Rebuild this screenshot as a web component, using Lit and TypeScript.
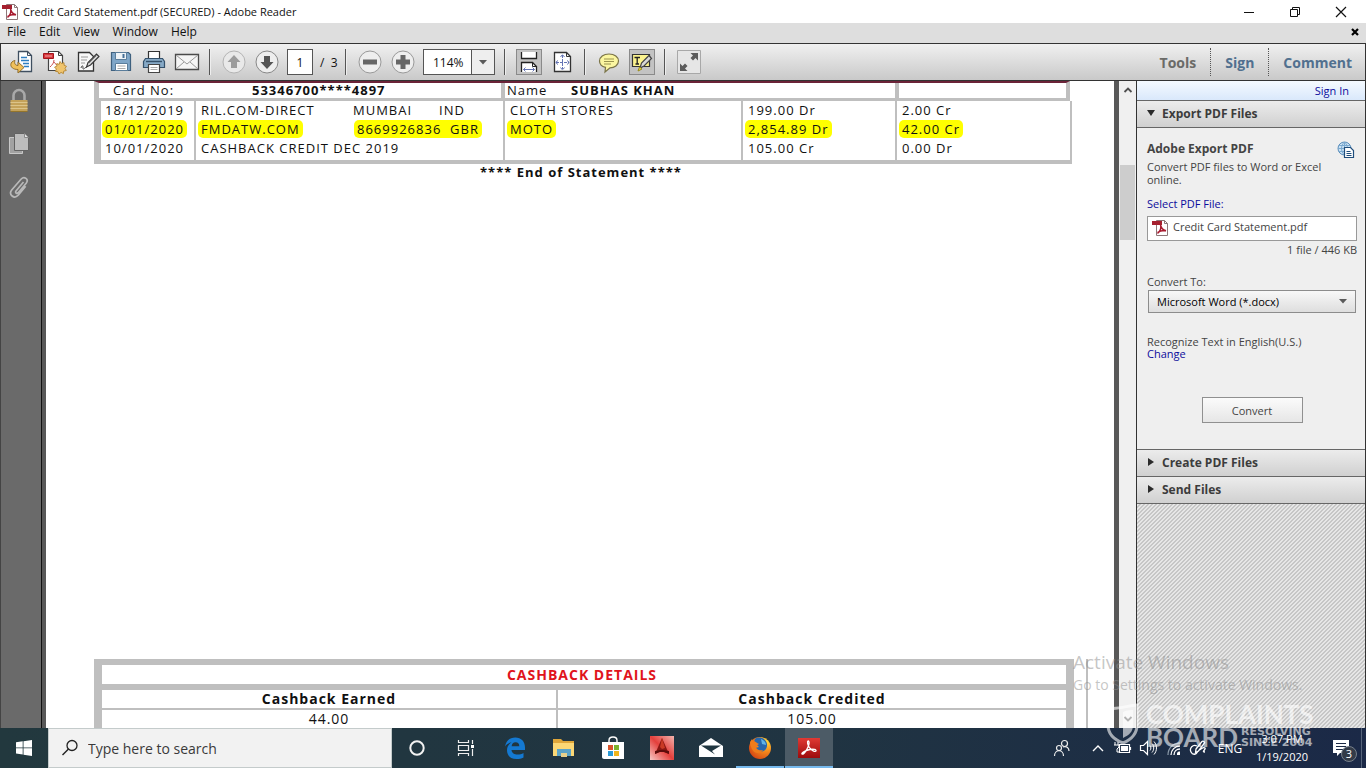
import { LitElement, html, css, svg } from "lit";
import { customElement } from "lit/decorators.js";
import { classMap } from "lit/directives/class-map.js";

const icon = (w: number, h: number, body: unknown) =>
  html`<svg width=${w} height=${h} viewBox="0 0 ${w} ${h}" fill="none" aria-hidden="true">${body}</svg>`;

const pdfFile = () => icon(17, 17, svg`
  <path d="M4.500 1.500h8l3 3v12h-11z" fill="#fff" stroke="#8d7779"/>
  <path d="M12.500 1.500v3h3" stroke="#8d7779"/>
  <path d="M0 2h10v4H0z" fill="#a5202f"/>
  <path d="M8.500 6c.6 3 2.500 5 5.500 6M8.800 6.500c.3 3-1.300 6.500-3.300 8M5.500 13.500c2-1.600 5-2.200 8.500-2" stroke="#a8192e" stroke-width="1.500"/>`);

const icons = {
  open: icon(26, 26, svg`
    <path d="M9.500 2.500h9l4 4v16h-13z" fill="#fff" stroke="#3f4f60" stroke-width="1.300"/>
    <path d="M18.500 2.500v4h4" stroke="#3f4f60"/>
    <path d="M12 8.500h6M12 11.500h8M14 14.500h6M15 17.500h5" stroke="#2f7fc2" stroke-width="1.600"/>
    <path d="M6 11.500c-6 1-6 9 3 9v3.500l6-5.500-6-5.500v3.500c-3 0-4-2.500-3-5z" fill="#f0c05a" stroke="#94702c"/>`),
  create: icon(26, 26, svg`
    <path d="M6.500 2.500h10l4 4v15h-14z" fill="#fff" stroke="#444" stroke-width="1.200"/>
    <path d="M16.500 2.500v4h4" stroke="#444"/>
    <path d="M1.500 4.500h10v5h-10z" fill="#d8373c" stroke="#a3151c"/>
    <path d="M3 7h7" stroke="#f0a8a8"/>
    <path d="M12 11c0 3-2 5-4 7M12 13c1 2 3 3 4 3" stroke="#c85050"/>
    <path d="M18 12.500l1.500 2 2.500-.8.100 2.600 2.400 1-1.500 2 1.300 2.200-2.600.6-.3 2.500-2.300-1.200L17 25l-1-2.300-2.500-.3.900-2.400-1.800-1.800 2.300-1.100-.1-2.500 2.400.8z" fill="#f0c46c" stroke="#b98c3c"/>`),
  sign: icon(26, 26, svg`
    <path d="M3.500 3.500h11l4 4v14.500h-15z" fill="#f8f8f8" stroke="#333" stroke-width="1.300"/>
    <path d="M6 8h7M6 11h6M6 14h4" stroke="#999"/>
    <path d="M6 19c1-3 2-3 2 0s2-1 4-1" stroke="#444"/>
    <path d="M11.500 18l1.500-4.500 8.500-8.500 2.500 2.500-8.500 8.500z" fill="#d9d9d9" stroke="#333" stroke-width="1.100"/>
    <path d="M14 14l7.500-7.500" stroke="#777"/>`),
  save: icon(26, 26, svg`
    <path d="M3.500 3.500h17l2 2v16h-19z" fill="#7fa6c8" stroke="#3f617f" stroke-width="1.200"/>
    <path d="M7.500 3.500h11v7h-11z" fill="#eef3f7" stroke="#5a7d9b"/>
    <path d="M14.500 5h2v4h-2z" fill="#456f96"/>
    <path d="M7.500 14.500h12v7h-12z" fill="#fff" stroke="#5a7d9b"/>
    <path d="M9.500 17h8M9.500 19.500h8" stroke="#aaa"/>`),
  print: icon(26, 26, svg`
    <path d="M7.500 2.500h11v8h-11z" fill="#fff" stroke="#333" stroke-width="1.200"/>
    <path d="M2.500 12.500l2-3h17l2 3v6h-21z" fill="#86a9c6" stroke="#34506a" stroke-width="1.200"/>
    <path d="M5 12.500h16" stroke="#34506a" stroke-width="1.400"/>
    <path d="M7.500 15.500h11v8h-11z" fill="#fff" stroke="#444" stroke-width="1.200"/>
    <path d="M9.500 18.500h7M9.500 20.500h7" stroke="#aaa"/>`),
  mail: icon(26, 26, svg`
    <path d="M1.500 5.500h23v15h-23z" fill="#f5f5f5" stroke="#4a4a4a" stroke-width="1.300"/>
    <path d="M2 6l11 9 11-9M2 20l8-7M24 20l-8-7" stroke="#999"/>`),
  up: icon(26, 26, svg`
    <circle cx="13" cy="13" r="11" fill="#e9e9e9" stroke="#b4b4b4"/>
    <path d="M13 6l6.500 7H16v6h-6v-6H6.500z" fill="#9c9c9c"/>`),
  down: icon(26, 26, svg`
    <circle cx="13" cy="13" r="11" fill="#eee" stroke="#888"/>
    <path d="M13 20l6.500-7H16V7h-6v6H6.500z" fill="#555"/>`),
  minus: icon(26, 26, svg`
    <circle cx="13" cy="13" r="11" fill="#eee" stroke="#999"/>
    <path d="M6 10.500h14v5H6z" fill="#666"/>`),
  plus: icon(26, 26, svg`
    <circle cx="13" cy="13" r="11" fill="#eee" stroke="#999"/>
    <path d="M10.500 6h5v4.500H20v5h-4.500V20h-5v-4.500H6v-5h4.500z" fill="#666"/>`),
  fitWidth: icon(26, 26, svg`
    <path d="M5.500 3v6.500h15V3" fill="#fff" stroke="#222" stroke-width="1.300"/>
    <path d="M5.500 23v-9.500h11l4 4V23" fill="#fff" stroke="#222" stroke-width="1.300"/>
    <path d="M16.500 13.500v4h4" stroke="#222"/>
    <path d="M7.500 20.500h11M9.500 18.500l-2 2 2 2M16.500 18.500l2 2-2 2" stroke="#6474b4"/>`),
  fitPage: icon(26, 26, svg`
    <path d="M5.500 3.500h12l4 4v15h-16z" fill="#fff" stroke="#333" stroke-width="1.300"/>
    <path d="M17.500 3.500v4h4" stroke="#333"/>
    <path d="M13.500 6v14M7 13.500h13M11.500 8l2-2.500 2 2.500M11.500 18.500l2 2.500 2-2.500M9 11.500l-2.500 2L9 15.500M18 11.500l2.500 2-2.500 2" stroke="#6474b4" stroke-dasharray="3 1"/>`),
  comment: icon(26, 26, svg`
    <path d="M13 5c5.500 0 9.500 3 9.500 7s-4 6.800-8.500 6.800L9 23l.5-4.700C6 17.500 3.500 15 3.500 12c0-4 4-7 9.500-7z" fill="#fbf6a0" stroke="#7a7448" stroke-width="1.200"/>
    <path d="M8 10h10M8 12.500h10M8 15h7" stroke="#9a9450"/>`),
  highlight: icon(26, 26, svg`
    <path d="M3.500 5.500h17v12h-17z" fill="#fbf38e" stroke="#333" stroke-width="1.200"/>
    <path d="M5.500 8.500h5.500M8.200 8.500v6.500M6.500 15h3.500" stroke="#222" stroke-width="1.300"/>
    <path d="M11 19l1.500-5 7.500-7.500 2.500 3-7.500 7.500z" fill="#d8d8d8" stroke="#444" stroke-width="1.200"/>
    <path d="M9 22l1.500-4 2.500 2z" fill="#f8e93c" stroke="#998c1c"/>`),
  expand: icon(26, 26, svg`
    <path d="M1.500 1.500h23v23h-23z" fill="#e6e6e6" stroke="#a8a8a8"/>
    <path d="M14.500 4H22v7.500l-2.500-2.500-2.500 2.500-2.500-2.500L17 6.500zM4 14.500V22h7.500L9 19.500l2.500-2.500L9 14.500 6.500 17z" fill="#5c5c5c"/>`),
  lock: icon(22, 26, svg`
    <path d="M5.500 12V7.500a5.500 5.500 0 0 1 11 0V12" stroke="#a9a9a9" stroke-width="2.600"/>
    <path d="M2.500 12h17v11h-17z" fill="#c4a25a"/>
    <path d="M2.500 14.500h17M2.500 17.500h17M2.500 20.500h17" stroke="#dcc48a"/>
    <path d="M2.500 23.500h17" stroke="#94752c"/>`),
  pages: icon(22, 26, svg`
    <path d="M1.500 6.500h13v16h-13z" fill="#a2a2a2" stroke="#c8c8c8"/>
    <path d="M6.500 2.500h10l4 4v13h-14z" fill="#bdbdbd" stroke="#636363"/>
    <path d="M16.500 2.500v4h4" fill="#e3e3e3" stroke="#888"/>`),
  clip: icon(22, 26, svg`
    <path d="M15.500 8l-7.500 9c-1.300 1.700.8 3.200 2.200 1.700l8-9.500c3-4-2-7.500-5-4.200l-9.500 11c-3.500 4.800 2.500 9.500 6.500 5.200l7.500-9" stroke="#b9b9b9" stroke-width="1.700"/>`),
  globe: icon(18, 18, svg`
    <circle cx="7.500" cy="7.500" r="6.500" fill="#cbe2f4" stroke="#5c8fbc"/>
    <path d="M1 7.500h13M7.500 1v13M2 4.500h11M2 10.500h11M7.500 1c-4 4-4 9 0 13M7.500 1c4 4 4 9 0 13" stroke="#7aa9d0"/>
    <path d="M7.500 6.500h6l3 3v7h-9z" fill="#fff" stroke="#1f4d7c" stroke-width="1.200"/>
    <path d="M9.500 10.500h4M9.500 12.500h5M9.500 14.500h5" stroke="#1f4d7c"/>`),
  caret: icon(8, 5, svg`<path d="M0 0h8L4 4.500z" fill="#5a5a5a"/>`),
  chevUp: icon(10, 8, svg`<path d="M1.500 6l3.500-3.500L8.500 6" stroke="#505050" stroke-width="1.800"/>`),
  chevDown: icon(10, 8, svg`<path d="M1.500 2l3.500 3.500L8.500 2" stroke="#404040" stroke-width="1.800"/>`),
  triDown: icon(8, 8, svg`<path d="M0 1h8L4 7z" fill="#2b2b2b"/>`),
  triRight: icon(8, 8, svg`<path d="M1 0l6 4-6 4z" fill="#2b2b2b"/>`),
  minimise: icon(12, 12, svg`<path d="M1 6.500h10" stroke="#111"/>`),
  restore: icon(12, 12, svg`<path d="M1.500 3.500h7v7h-7zM3.500 3.500v-2h7v7h-2" stroke="#111"/>`),
  close: icon(12, 12, svg`<path d="M1 1l10 10M11 1L1 11" stroke="#111" stroke-width="1.200"/>`),
  closeDoc: icon(8, 8, svg`<path d="M1 1l6 6M7 1L1 7" stroke="#000" stroke-width="2.200"/>`),
  windows: icon(16, 16, svg`<path d="M0 2.300l6.700-1v6.200H0zM7.500 1.200L16 0v7.500H7.500zM0 8.300h6.700v6.200l-6.700-1zM7.500 8.300H16V16l-8.500-1.200z" fill="#fff"/>`),
  search: icon(18, 18, svg`<circle cx="11" cy="6.500" r="5" stroke="#222" stroke-width="1.300"/><path d="M7.500 10L1.500 16" stroke="#222" stroke-width="1.400"/>`),
  cortana: icon(18, 18, svg`<circle cx="9" cy="9" r="6.700" stroke="#f2f2f2" stroke-width="2"/>`),
  taskView: icon(18, 18, svg`<path d="M1.500 1v2.500h10V1M1.500 17v-2.500h10V17M1.500 6.500h10v5h-10z" stroke="#eee" stroke-width="1.200"/><path d="M15.500 1v4M15.500 10v7" stroke="#eee" stroke-width="1.200"/><path d="M14 6h3v3h-3z" fill="#fff"/>`),
  edge: icon(24, 24, svg`<path d="M2 10.500C3 4.500 7 1.500 12.300 1.500c6 0 9.700 4.300 9.700 10V14H8.500c.3 3.300 3 4.500 6 4.500 2.300 0 4.300-.6 6-1.600v4.600c-2 1-4.300 1.500-7 1.500-6 0-9.500-3.500-9.500-8.700 0-3.500 1.700-6.300 4.700-8C5.500 7 3.500 8.500 2 10.500zM8.600 10.300h7.700c0-2.600-1.300-4-3.700-4s-3.600 1.500-4 4z" fill="#1479d2"/>`),
  folder: icon(24, 24, svg`<path d="M1 3h8l2 2h11v5H1z" fill="#dfa63a"/><path d="M1 7h21v13H1z" fill="#fbd775"/><path d="M5 20v-7h14v7h-4v-3H9v3z" fill="#5ba3c8"/><path d="M9 17h6v4H9z" fill="#e9d18b"/>`),
  store: icon(24, 24, svg`<path d="M8 7V4.500C8 2.500 9.500 1 12 1s4 1.500 4 3.500V7" stroke="#fff" stroke-width="1.400"/><path d="M1 6h22v17H3c-1 0-2-1-2-2z" fill="#fff"/><path d="M7 9h5v5H7z" fill="#d8552c"/><path d="M13 9h5v5h-5z" fill="#7db32e"/><path d="M7 15h5v5H7z" fill="#2b9bd7"/><path d="M13 15h5v5h-5z" fill="#f0b51d"/>`),
  autocad: icon(24, 24, svg`<defs><linearGradient id="cad" x1="0" y1="1" x2="1" y2="0"><stop stop-color="#f7c9c6"/><stop offset=".5" stop-color="#e4403c"/><stop offset="1" stop-color="#f2b4ae"/></linearGradient></defs><path d="M0 0h24v24H0z" fill="url(#cad)"/><path d="M12 2l7 16-5-2H9l-4 2z" fill="#8a1712"/><path d="M12 2l-2 9 2 2 3-1z" fill="#c93a24"/><path d="M5 15l5-1h4l5 1v3l-5-2h-4l-5 2z" fill="#5c0c0b"/>`),
  mailApp: icon(24, 24, svg`<path d="M12 2l12 8v11H0V10z" fill="#fff"/><path d="M2 9.500h20L13 15l3 3.500z" fill="#203640"/>`),
  firefox: icon(24, 24, svg`<defs><radialGradient id="fx" cx=".8" cy=".2" r="1"><stop stop-color="#ffd83a"/><stop offset=".45" stop-color="#f58a1d"/><stop offset="1" stop-color="#cf3c12"/></radialGradient></defs><circle cx="12" cy="12" r="11" fill="url(#fx)"/><path d="M7 3c4-3 11-1 12 5 .6 5-3 8-7 8-3 0-5-2-5-4l4-1-3-3c-2 0-2-3-1-5z" fill="#2767ad"/><path d="M13 3c3 1 5 3 5 6l-4-1z" fill="#5fb3e6"/><path d="M2 6l2-3 1 2c2 0 3 1 4 2l2 1-3 2c0 4 4 5 7 4-2 4-9 4-11-1-1-2-2-4-2-7z" fill="#ee7c1c"/>`),
  acrobat: icon(24, 24, svg`<defs><linearGradient id="ac" x1="0" y1="0" x2="0" y2="1"><stop stop-color="#e03a34"/><stop offset="1" stop-color="#9c0b0c"/></linearGradient></defs><path d="M1 2h22v20H1z" fill="url(#ac)"/><path d="M11 5c2 0 1 5-1 8-1.500 3-4 6-5 5s4-4 8-4.500c4-.7 6.500.2 6 1.400-.7 1.200-4.500-.4-6.500-3.200C10.700 9 10 5.500 11 5z" stroke="#fff" stroke-width="1.300"/>`),
  people: icon(18, 18, svg`<circle cx="11.500" cy="4.500" r="3" stroke="#eee" stroke-width="1.200"/><circle cx="6" cy="9" r="2.500" stroke="#eee" stroke-width="1.200"/><path d="M1.500 17c0-7 9-7 9 0M10 8c4-1 6 1 6 4" stroke="#eee" stroke-width="1.200"/>`),
  trayUp: icon(14, 10, svg`<path d="M2 8l5-5 5 5" stroke="#fff" stroke-width="1.400"/>`),
  battery: icon(18, 14, svg`<path d="M5.500 3.500h10v8h-10zM16.500 6v3" stroke="#fff" stroke-width="1.200"/><path d="M7 5h7v5H7z" fill="#fff"/><path d="M1 1v3M4 1v3M0 4h5v2L3 8v3h3" stroke="#fff"/>`),
  speaker: icon(18, 16, svg`<path d="M1.500 5.500h3l4-4v13l-4-4h-3z" stroke="#fff" stroke-width="1.200"/><path d="M11 5.500c1.200 1.500 1.200 3.500 0 5M13 3.500c2.300 2.500 2.300 6.500 0 9M15 1.500c3.300 3.700 3.300 9.300 0 13" stroke="#fff"/>`),
  wifi: icon(16, 16, svg`<path d="M3 15C3 8 8 3 15 3" stroke="#8a99a8" stroke-width="1.300"/><path d="M6 15c0-5 4-9 9-9M9 15c0-3.500 2.500-6 6-6" stroke="#fff" stroke-width="1.300"/><path d="M12 15v-1.500c0-1 1-2 2-2h1V15z" fill="#fff"/>`),
  pen: icon(18, 16, svg`<path d="M7 9l6-7.500c1-1 3 .5 2.500 1.500L9.500 11 6.500 13z" stroke="#fff" stroke-width="1.300"/><path d="M8 6C4 4 0 8 2 12c2 4 7 2 6-1M11 10c2-3 6-3 5-1s-3 3 0 3" stroke="#fff" stroke-width="1.300"/>`),
  action: icon(18, 18, svg`<path d="M1 1h16v13H8l-3 3v-3H1z" fill="#fff"/><path d="M4 4.500h10M4 7.500h10M4 10.500h7" stroke="#1c2a45" stroke-width="1.200"/>`),
  shield: icon(34, 42, svg`<path d="M3 5c9 2 20-3 28-3v20c0 10-7 15-14 18C9 37 2 32 2 22z" stroke="#fff" stroke-width="3"/><path d="M17 9c4-2 8-2 10-2v15c0 7-4 10-10 13z" fill="#fff"/>`),
};

type Tool = { label: string; art: unknown; on?: boolean };

@customElement("app-root")
export class AppRoot extends LitElement {
  static styles = css`
    :host {
      display: flex; flex-direction: column; height: 100vh; overflow: hidden; position: relative;
      font: 11px/13px "Open Sans", "Noto Sans", sans-serif; color: #111; background: #fff;
    }
    * { box-sizing: border-box; }
    svg { display: block; flex: none; }
    button { font: inherit; color: inherit; border: 0; background: none; padding: 0; margin: 0; display: flex; align-items: center; justify-content: center; }
    input, select { font: inherit; color: inherit; margin: 0; border-radius: 0; appearance: none; }
    a { color: #0c0c9c; text-decoration: none; }
    h1, h2, h3, p { margin: 0; font: inherit; }

    .title { display: flex; align-items: center; height: 23px; flex: none; padding: 0 2px; }
    .title h1 { flex: 1; padding-left: 4px; }
    .title button { width: 46px; height: 20px; }
    .menu { display: flex; align-items: center; height: 20px; flex: none; background: #dedede; padding: 0 7px 3px; gap: 13px; font-size: 12px; }
    .menu .shut { margin-left: auto; }
    .bar { display: flex; align-items: center; height: 38px; flex: none; padding: 0 13px 0 4px; border: 1px solid #333; border-right-width: 1px; background: linear-gradient(#f0f0f0, #c9c9c9); }
    .tool { width: 33px; height: 26px; }
    .tool.on svg { background: #c3c3c3; outline: 1px solid #8a8a8a; outline-offset: -1px; }
    .sep { width: 2px; height: 26px; margin: 0 6px; border-left: 1px solid #555; border-right: 1px solid #eee; }
    .page { width: 26px; height: 26px; margin-left: 4px; border: 1px solid #555; background: #fff; text-align: center; padding: 0; font-size: 12px; }
    .total { padding-left: 7px; width: 26px; font-size: 12px; white-space: pre; }
    .zoom { display: grid; grid-template-columns: 1fr 23px; width: 72px; height: 26px; margin: 0 3px 0 4px; background: #fff; border: 1px solid #555; align-items: center; }
    .zoom select { grid-area: 1 / 1 / 2 / 3; width: 100%; height: 24px; border: 0; background: none; padding: 0 0 0 9px; font-size: 12px; }
    .zoom svg { grid-area: 1 / 2; justify-self: center; pointer-events: none; }
    .zoom .cell { grid-area: 1 / 2; border-left: 1px solid #555; height: 24px; background: #eee; }
    .tabs { margin-left: auto; display: flex; align-items: center; font-size: 14px; font-weight: 700; color: #51708f; }
    .tabs button { height: 28px; }
    .tabs button + button { border-left: 1px dotted #555; margin-left: 14px; padding-left: 14px; }
    .tabs .now { color: #6b6b68; }

    .main { flex: 1; min-height: 0; display: flex; }
    .rail { width: 46px; flex: none; display: flex; flex-direction: column; align-items: center; gap: 17px; padding: 7px 5px 0 0; background: #6a6a6a; border-left: 1px solid #444; border-right: 4px solid #585858; box-shadow: inset -1px 0 #111; }
    .doc { flex: 1; min-width: 0; overflow: hidden; background: #fff; padding: 0 42px 0 48px; font: 13px/18px "Open Sans", "Noto Sans", sans-serif; letter-spacing: 1px; }
    table { border-collapse: separate; border-spacing: 0; table-layout: fixed; width: 100%; }
    td, th { padding: 0; text-align: left; font-weight: 400; white-space: pre; }
    .head { width: calc(100% - 2px); border: solid #bfbfbf; border-width: 2px 4px 3px 5px; border-top-color: #6b2338; }
    .head td { height: 15px; line-height: 15px; }
    .head td:first-child { padding-left: 14px; }
    .head .cut { border-left: 4px solid #bfbfbf; padding-left: 2px; }
    .rows { border: solid #bfbfbf; border-width: 0 2px 4px 7px; }
    .rows td { height: 19px; line-height: 19px; border-left: 2px solid #bfbfbf; padding-left: 5px; }
    .rows td:first-child { border-left: 0; padding-left: 4px; }
    .rows tr:last-child td { height: 21px; padding-bottom: 2px; }
    .c-date { width: 93px; } .c-what { width: 309px; } .c-kind { width: 238px; } .c-amt { width: 154px; }
    .c-card { width: 153px; } .c-num { width: 249px; } .c-name { width: 394px; }
    .who { display: inline-block; width: 64px; }
    .place { display: inline-block; width: 152px; }
    .city { display: inline-block; width: 86px; }
    mark { color: inherit; background: #ff0; border-radius: 5px; padding: 0 3px; margin: 0 -3px; }
    .party { display: inline-block; width: 156px; }
    b { font-weight: 700; }
    .end { text-align: center; font-weight: 700; line-height: 16px; padding-right: 4px; }
    .cash { margin: 479px -16px 0 0; padding-right: 12px; border-right: 2px solid #bfbfbf; }
    .cash table { border: solid #bfbfbf; border-width: 6px 8px 0 8px; }
    .cash th, .cash td { text-align: center; height: 18px; line-height: 16px; font-size: 14px; }
    .cash .name { color: #e0141c; font-weight: 700; border-bottom: 6px solid #bfbfbf; height: 25px; line-height: 18px; padding-right: 4px; font-size: 14px; }
    .cash .sub th { font-weight: 700; border-bottom: 2px solid #bfbfbf; height: 20px; }
    .cash .sub > :first-child, .cash .val > :first-child { border-right: 2px solid #bfbfbf; }
    .c-left { width: 456px; }

    .scroll { width: 22px; flex: none; display: flex; flex-direction: column; background: #f0f0f0; border-left: 5px solid #585858; }
    .scroll button { height: 18px; }
    .thumb { height: 75px; margin: 66px 1px 0; background: #cdcdcd; }
    .scroll .last { margin-top: auto; }

    .panel { width: 230px; flex: none; display: flex; flex-direction: column; border: solid #333; border-width: 0 1px; color: #444; }
    .signin { display: flex; height: 20px; justify-content: flex-end; align-items: center; padding: 0 16px 1px 0; background: linear-gradient(#f5faff, #d9e8fb); border-bottom: 1px solid #666; }
    .fold { height: 27px; width: 100%; justify-content: flex-start; gap: 7px; padding: 0 0 2px 10px; font-size: 12px; font-weight: 700; color: #3c3c3c; background: linear-gradient(#ececec, #d0d0d0); border-bottom: 1px solid #666; }
    .export { display: flex; flex-direction: column; height: 322px; padding: 13px 8px 0 10px; background: #efefef; border-bottom: 1px solid #666; }
    .lead { display: flex; justify-content: space-between; height: 19px; font-size: 12px; font-weight: 700; padding-right: 2px; line-height: 16px; }
    .pick { margin: 11px 0 6px; }
    .file { display: flex; gap: 4px; height: 25px; padding: 2px 4px; border: 1px solid #999; background: #fff; line-height: 15px; }
    .size { text-align: right; margin: 2px 0 19px; }
    .kind { display: grid; height: 23px; margin: 2px 1px 23px; align-items: center; border: 1px solid #8c8c8c; background: linear-gradient(#f8f8f8, #dedede); color: #000; }
    .kind select { grid-area: 1 / 1; width: 100%; border: 0; background: none; padding: 0 8px; }
    .kind svg { grid-area: 1 / 1; justify-self: end; margin-right: 8px; pointer-events: none; }
    .lang { line-height: 12px; }
    .go { align-self: center; width: 101px; height: 26px; margin-top: 37px; border: 1px solid #909090; background: linear-gradient(#fbfbfb, #e6e6e6); }
    .hatch { flex: 1; background: linear-gradient(135deg, #e6e6e6 25%, #c6c6c6 25% 50%, #e6e6e6 50% 75%, #c6c6c6 75%) 0 0 / 4px 4px; }

    .task { display: flex; height: 40px; flex: none; gap: 1px; background: linear-gradient(90deg, #22383e, #203442 60%, #1b2947); color: #fff; }
    .task button { width: 48px; height: 40px; flex: none; }
    .find { display: flex; align-items: center; gap: 9px; width: 344px; margin-left: -1px; padding-left: 12px; background: #f2f2f2; border: 1px solid #c4cbcb; color: #333; }
    .find input { border: 0; background: none; padding: 0; flex: 1; font-size: 14px; min-width: 0; }
    .find input::placeholder { color: #3a3a3a; opacity: 1; }
    .task .run { border-bottom: 2px solid #76b9ed; padding-top: 2px; }
    .task .front { background: #4c5b66; }
    .tray { margin-left: auto; display: flex; align-items: center; padding-right: 4px; }
    .tray button { width: 25px; }
    .tray .people { width: 46px; }
    .tray .lang-id { width: 26px; margin-left: 7px; font-size: 12px; }
    .clock { width: 78px; text-align: center; line-height: 18px; }
    .tray .note { width: 40px; position: relative; }
    .count { position: absolute; left: 20px; top: 18px; width: 16px; height: 16px; border-radius: 8px; background: #333b48; border: 1px solid #77808c; font-size: 11px; line-height: 14px; }
    .edge { width: 1px; height: 40px; background: #56647a; }

    .activate { position: absolute; right: 57px; bottom: 73px; width: 236px; color: rgba(140, 140, 140, .5); font-size: 14px; line-height: 20px; pointer-events: none; white-space: nowrap; }
    .activate strong { display: block; font-size: 19px; font-weight: 400; line-height: 26px; }
    .brand { position: absolute; right: 48px; bottom: 19px; display: flex; gap: 6px; width: 212px; color: #fff; opacity: .6; font: 700 26px/23px Lato, sans-serif; pointer-events: none; }
    .brand div { display: grid; grid-template-columns: auto 1fr; column-gap: 3px; }
    .brand .big { grid-column: 1 / 3; }
    .brand small { font: 700 11px/11px "DejaVu Sans", sans-serif; }
  `;

  private tools(list: Tool[]) {
    return list.map((t) => html`<button class=${classMap({ tool: true, on: !!t.on })} aria-label=${t.label}>${t.art}</button>`);
  }

  private apps: [string, unknown, string][] = [
    ["Cortana", icons.cortana, ""], ["Task view", icons.taskView, ""], ["Edge", icons.edge, ""],
    ["Explorer", icons.folder, ""], ["Store", icons.store, ""], ["AutoCAD", icons.autocad, ""],
    ["Mail", icons.mailApp, ""], ["Firefox", icons.firefox, "run"], ["Adobe Reader", icons.acrobat, "run front"],
  ];

  render() {
    const i = icons;
    const sep = html`<span class="sep"></span>`;
    return html`
      <header class="title">${pdfFile()}<h1>Credit Card Statement.pdf (SECURED) - Adobe Reader</h1>
        <button aria-label="Minimise">${i.minimise}</button><button aria-label="Restore">${i.restore}</button><button aria-label="Close">${i.close}</button>
      </header>
      <nav class="menu">
        ${["File", "Edit", "View", "Window", "Help"].map((m) => html`<button>${m}</button>`)}
        <button class="shut" aria-label="Close document">${i.closeDoc}</button>
      </nav>
      <div class="bar">
        ${this.tools([{ label: "Open", art: i.open }, { label: "Create", art: i.create }, { label: "Sign", art: i.sign }, { label: "Save", art: i.save }, { label: "Print", art: i.print }, { label: "Email", art: i.mail }])}
        ${sep}
        ${this.tools([{ label: "Previous page", art: i.up }, { label: "Next page", art: i.down }])}
        <input class="page" aria-label="Page" .value=${"1"} /><span class="total">/  3</span>
        ${sep}
        ${this.tools([{ label: "Zoom out", art: i.minus }, { label: "Zoom in", art: i.plus }])}
        <div class="zoom"><span class="cell"></span><select aria-label="Zoom"><option>114%</option></select>${i.caret}</div>
        ${sep}
        ${this.tools([{ label: "Fit width", art: i.fitWidth, on: true }, { label: "Fit page", art: i.fitPage }])}
        ${sep}
        ${this.tools([{ label: "Add note", art: i.comment }, { label: "Highlight text", art: i.highlight, on: true }])}
        ${sep}
        ${this.tools([{ label: "Read mode", art: i.expand }])}
        <div class="tabs"><button class="now">Tools</button><button>Sign</button><button>Comment</button></div>
      </div>

      <div class="main">
        <aside class="rail">
          <button aria-label="Security">${i.lock}</button><button aria-label="Pages">${i.pages}</button><button aria-label="Attachments">${i.clip}</button>
        </aside>
        <main class="doc">
          <table class="head">
            <colgroup><col class="c-card" /><col class="c-num" /><col class="c-name" /><col /></colgroup>
            <tr><td>Card No:</td><td><b>53346700****4897</b></td><td class="cut"><span class="who">Name</span><b>SUBHAS KHAN</b></td><td class="cut"></td></tr>
          </table>
          <table class="rows">
            <colgroup><col class="c-date" /><col class="c-what" /><col class="c-kind" /><col class="c-amt" /><col /></colgroup>
            <tr><td>18/12/2019</td><td><span class="place">RIL.COM-DIRECT</span><span class="city">MUMBAI</span>IND</td><td>CLOTH STORES</td><td>199.00 Dr</td><td>2.00 Cr</td></tr>
            <tr><td><mark>01/01/2020</mark></td><td><span class="party"><mark>FMDATW.COM</mark></span><mark>8669926836  GBR</mark></td><td><mark>MOTO</mark></td><td><mark>2,854.89 Dr</mark></td><td><mark>42.00 Cr</mark></td></tr>
            <tr><td>10/01/2020</td><td>CASHBACK CREDIT DEC 2019</td><td></td><td>105.00 Cr</td><td>0.00 Dr</td></tr>
          </table>
          <p class="end">**** End of Statement ****</p>
          <div class="cash">
            <table>
              <colgroup><col class="c-left" /><col /></colgroup>
              <tr><th class="name" colspan="2">CASHBACK DETAILS</th></tr>
              <tr class="sub"><th>Cashback Earned</th><th>Cashback Credited</th></tr>
              <tr class="val"><td>44.00</td><td>105.00</td></tr>
            </table>
          </div>
        </main>
        <div class="scroll">
          <button aria-label="Scroll up">${i.chevUp}</button><div class="thumb"></div><button class="last" aria-label="Scroll down">${i.chevDown}</button>
        </div>
        <aside class="panel">
          <div class="signin"><a href="#">Sign In</a></div>
          <button class="fold">${i.triDown}Export PDF Files</button>
          <section class="export">
            <h2 class="lead">Adobe Export PDF ${i.globe}</h2>
            <p>Convert PDF files to Word or Excel online.</p>
            <a class="pick" href="#">Select PDF File:</a>
            <div class="file">${pdfFile()}<span>Credit Card Statement.pdf</span></div>
            <p class="size">1 file / 446 KB</p>
            <label for="kind">Convert To:</label>
            <div class="kind"><select id="kind"><option>Microsoft Word (*.docx)</option></select>${i.caret}</div>
            <p class="lang">Recognize Text in English(U.S.)</p>
            <a class="lang" href="#">Change</a>
            <button class="go">Convert</button>
          </section>
          <button class="fold">${i.triRight}Create PDF Files</button>
          <button class="fold">${i.triRight}Send Files</button>
          <div class="hatch"></div>
        </aside>
      </div>

      <footer class="task">
        <button aria-label="Start">${i.windows}</button>
        <label class="find">${i.search}<input aria-label="Search" placeholder="Type here to search" /></label>
        ${this.apps.map(([name, art, cls]) => html`<button class=${cls} aria-label=${name}>${art}</button>`)}
        <div class="tray">
          <button class="people" aria-label="People">${i.people}</button><button aria-label="Hidden icons">${i.trayUp}</button>
          <button aria-label="Battery">${i.battery}</button><button aria-label="Volume">${i.speaker}</button>
          <button aria-label="Network">${i.wifi}</button><button aria-label="Ink">${i.pen}</button>
          <button class="lang-id">ENG</button>
          <div class="clock">3:07 PM<br />1/19/2020</div>
          <button class="note" aria-label="Notifications">${i.action}<span class="count">3</span></button>
          <span class="edge"></span>
        </div>
      </footer>
      <div class="activate"><strong>Activate Windows</strong>Go to Settings to activate Windows.</div>
      <div class="brand">${i.shield}<div><span class="big">COMPLAINTS</span><span>BOARD</span><small>RESOLVING SINCE 2004</small></div></div>
    `;
  }
}
